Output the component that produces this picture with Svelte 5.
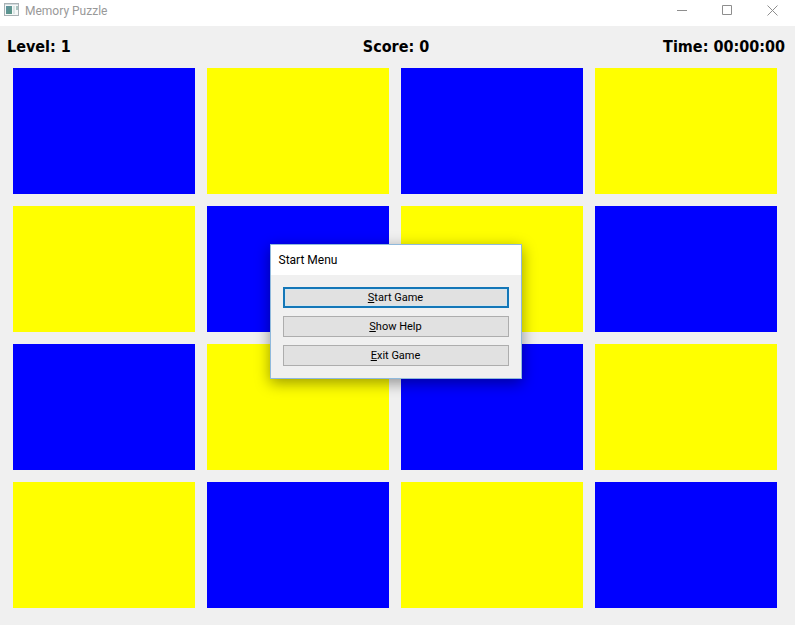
<script>
  const size = 4;
  const tiles = Array.from({ length: size * size }, (_, i) => {
    const row = Math.floor(i / size);
    return (row + i) % 2 === 0 ? 'blue' : 'yellow';
  });

  let level = $state(1);
  let score = $state(0);
  let time = $state('00:00:00');
</script>

<div class="window">
  <header class="titlebar">
    <svg class="app-icon" width="16" height="14" viewBox="0 0 16 14" aria-hidden="true">
      <defs>
        <linearGradient id="pane" x1="0" y1="0" x2="1" y2="1">
          <stop offset="0" stop-color="#5f93a0" />
          <stop offset="1" stop-color="#5a9683" />
        </linearGradient>
      </defs>
      <rect x="0.5" y="0.5" width="14" height="12" fill="#f6f8f8" stroke="#a9b2b5" />
      <rect x="1" y="1" width="13" height="1" fill="#d3dbde" />
      <rect x="2" y="3" width="6" height="8" fill="url(#pane)" />
      <rect x="9" y="3" width="2" height="8" fill="#dbe6e5" />
      <rect x="12" y="3" width="2" height="4" fill="#a9c4c0" />
    </svg>
    <h1>Memory Puzzle</h1>
    <div class="controls">
      <button aria-label="Minimize">
        <svg width="11" height="11" viewBox="0 0 11 11"><path d="M0 5.5h10" /></svg>
      </button>
      <button aria-label="Maximize">
        <svg width="11" height="11" viewBox="0 0 11 11"><path d="M.5 .5h9v9h-9z" /></svg>
      </button>
      <button aria-label="Close">
        <svg width="11" height="11" viewBox="0 0 11 11"><path d="M.5 .5l10 10M10.5 .5l-10 10" /></svg>
      </button>
    </div>
  </header>

  <div class="status">
    <span>Level: {level}</span>
    <span>Score: {score}</span>
    <span>Time: {time}</span>
  </div>

  <main class="board">
    {#each tiles as color}
      <div class="tile {color}"></div>
    {/each}
  </main>

  <div class="dialog" role="dialog" aria-labelledby="menu-title">
    <h2 id="menu-title">Start Menu</h2>
    <div class="actions">
      <button class="default"><u>S</u>tart Game</button>
      <button><u>S</u>how Help</button>
      <button><u>E</u>xit Game</button>
    </div>
  </div>
</div>

<style>
  :global(body) {
    margin: 0;
  }

  .window {
    position: relative;
    display: flex;
    flex-direction: column;
    box-sizing: border-box;
    min-height: 100vh;
    background: #f0f0f0;
    color: #000;
    font-family: Roboto, 'Noto Sans', sans-serif;
  }

  .titlebar {
    display: flex;
    align-items: center;
    height: 26px;
    padding: 0 0 0 4px;
    background: #fff;
  }

  .app-icon {
    margin-bottom: 6px;
  }

  h1 {
    flex: 1;
    margin: 0 0 4px 5px;
    font-size: 12px;
    line-height: 18px;
    font-weight: 400;
    color: #999;
  }

  .controls {
    display: flex;
    margin-bottom: 5px;
  }

  .controls button {
    display: flex;
    align-items: center;
    justify-content: center;
    width: 45px;
    height: 20px;
    padding: 0;
    border: 0;
    background: none;
  }

  .controls svg {
    fill: none;
    stroke: #8e8e8e;
    stroke-width: 1;
  }

  .status {
    display: grid;
    grid-template-columns: 1fr auto 1fr;
    align-items: center;
    height: 42px;
    padding: 0 10px 0 7px;
    font-family: 'DejaVu Sans Condensed', 'Noto Sans', sans-serif;
    font-size: 16px;
    line-height: 24px;
    font-weight: 700;
  }

  .status span:last-child {
    text-align: right;
  }

  .board {
    flex: 1;
    display: grid;
    grid-template-columns: repeat(4, 1fr);
    grid-template-rows: repeat(4, 1fr);
    gap: 12px;
    padding: 0 18px 17px 13px;
  }

  .blue {
    background: #00f;
  }

  .yellow {
    background: #ff0;
  }

  .dialog {
    position: absolute;
    top: calc(50% - 69px);
    left: calc(50% - 128px);
    box-sizing: border-box;
    width: 252px;
    border: 1px solid #8fb9dc;
    background: #f0f0f0;
    box-shadow: 0 4px 14px rgba(0, 0, 0, 0.4);
  }

  h2 {
    margin: 0;
    padding: 0 8px;
    background: #fff;
    font-size: 12px;
    line-height: 30px;
    font-weight: 400;
  }

  .actions {
    display: flex;
    flex-direction: column;
    gap: 8px;
    padding: 12px;
  }

  .actions button {
    display: flex;
    align-items: center;
    justify-content: center;
    box-sizing: border-box;
    height: 21px;
    padding: 2px 0 0;
    border: 1px solid #adadad;
    background: #e1e1e1;
    color: #000;
    font-family: inherit;
    font-size: 11px;
    line-height: 16px;
  }

  .actions .default {
    border: 2px solid #1477b8;
    box-shadow: inset 0 0 0 1px #d3e6ef;
  }
</style>
